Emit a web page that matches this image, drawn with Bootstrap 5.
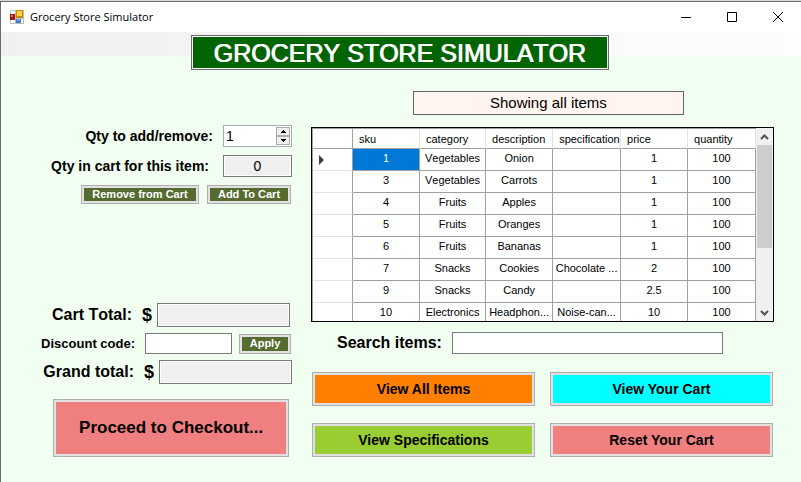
<!DOCTYPE html>
<html lang="en">
<head>
<meta charset="utf-8">
<meta name="viewport" content="width=device-width, initial-scale=1">
<title>Grocery Store Simulator</title>
<link href="https://cdn.jsdelivr.net/npm/bootstrap@5.3.0/dist/css/bootstrap.min.css" rel="stylesheet">
<style>
  body {
    font-family: "Liberation Sans", Arial, sans-serif;
    font-kerning: none;
    color: #000;
    background: #f0fff0;
    border-top: 1px solid #d9d9d9;
  }
  .app-window { min-height: calc(100vh - 1px); border-top: 1px solid #6b6b6b; border-left: 1px solid #6b6b6b; }

  .title-bar { height: 30px; background: #fff; padding-left: 9px; font: 11px/30px "Open Sans", "Noto Sans", sans-serif; }
  .title-bar .app-icon { margin-right: 6px; }
  .caption-btn { width: 46px; height: 30px; padding: 0; border: 0; background: none; line-height: 0; }

  .workspace { background: linear-gradient(90deg, #f0f0f0, #fdfdfd) top / 100% 24px no-repeat; padding: 3px 0 24px; }
  .banner-row { padding-right: 2px; }
  .banner { padding: 0 22px 0 21px; height: 35px; margin: 0; border: 1px solid #696969; box-shadow: inset 0 0 0 1px #fff; background: #006400; color: #fff; font-size: 25px; font-weight: 400; text-shadow: 1px 0 0 #fff; line-height: 34px; }

  .panes { display: grid; grid-template-columns: 291fr 463fr; column-gap: 19px; padding-right: 27px; }
  .pane-left { padding-top: 55px; }
  .pane-right { padding-top: 21px; }

  .lbl { font-size: 14px; font-weight: 700; line-height: 20px; white-space: nowrap; }
  .lbl-sm { font-size: 13px; }
  .lbl-lg { font-size: 16px; }
  .currency { margin-left: 10px; font-size: 18px; font-weight: 700; line-height: 20px; }
  .label-gap { gap: 10px; }
  .label-gap-lg { gap: 14px; }

  .field { min-width: 0; height: 22px; padding: 0 4px; border: 1px solid #7a7a7a; border-radius: 0; background: #fff; font-size: 14px; line-height: 18px; color: #000; }
  .field-read { background: #f0f0f0; box-shadow: inset 0 0 0 1px #fff; }
  .field-total { width: 133px; height: 24px; margin-left: 5px; }
  .field-qty { width: 69px; text-align: center; }
  .field-code { width: 87px; height: 21px; margin-left: 10px; }

  .spinner { width: 69px; height: 22px; border: 1px solid #abadb3; background: #fff; }
  .spinner input { width: 0; min-width: 0; padding: 0 2px; border: 0; background: none; font-size: 14px; line-height: 18px; outline: 0; appearance: textfield; -moz-appearance: textfield; }
  .spinner input::-webkit-inner-spin-button { -webkit-appearance: none; margin: 0; }
  .spin-btns { width: 15px; padding: 1px 1px 1px 0; }
  .spin-btns button { display: flex; align-items: center; justify-content: center; flex: 1 1 0; padding: 0; border: 1px solid #acacac; background: #f0f0f0; line-height: 0; }

  .push { border: 1px solid #adadad; border-radius: 0; box-shadow: inset 0 0 0 2px #e1e1e1; padding: 0; color: #000; font-weight: 700; font-size: 14px; line-height: 20px; white-space: nowrap; }
  .push-olive { height: 19px; background: #556b2f; color: #fff; font-size: 11px; line-height: 17px; }
  .push-remove { width: 118px; }
  .push-add { width: 84px; }
  .push-apply { width: 52px; height: 20px; margin-left: 7px; }
  .push-checkout { display: block; width: 81%; height: 58px; margin: 15px 3px 0 auto; font-size: 17px; background: #f08080; }
  .push-tall { height: 34px; }
  .bg-orange { background: #ff8000; }
  .bg-aqua { background: #0ff; }
  .bg-lime { background: #9acd32; }
  .bg-coral { background: #f08080; }

  .inset-1 { padding-right: 1px; }
  .inset-2 { padding-right: 2px; }
  .totals { display: grid; row-gap: 6px; margin-top: 99px; }

  .status-line { width: 271px; height: 24px; margin-left: 22%; border: 1px solid #646464; background: #fff5ee; font-size: 15px; line-height: 22px; text-align: center; }

  .grid-frame { height: 195px; margin-top: 12px; border: 1px solid #000; background: #fff; overflow: hidden; }
  .grid-view { flex: 1 1 0; min-width: 0; overflow: hidden; border-top: 1px solid #a0a0a0; border-left: 1px solid #a0a0a0; }
  .items { width: 100%; table-layout: fixed; border-collapse: separate; border-spacing: 0; font-size: 11px; line-height: 19px; }
  .items th, .items td { height: 22px; padding: 0 2px 2px; border-right: 1px solid #a0a0a0; border-bottom: 1px solid #a0a0a0; overflow: hidden; text-overflow: ellipsis; white-space: nowrap; text-align: center; font-weight: 400; }
  .items thead th { height: 20px; padding: 1px 0 0 6px; line-height: 18px; border-right-color: #e3e3e3; text-align: left; text-overflow: clip; }
  .items tbody th { padding: 0 0 0 6px; border-bottom-color: #e3e3e3; text-align: left; }
  .items thead th:first-child { border-right-color: #a0a0a0; }
  .items td.picked { background: #0078d7; color: #fff; }
  .c-head { width: 9%; }
  .c-narrow { width: 14.9%; }
  .c-mid { width: 15.1%; }
  .c-wide { width: 15.3%; }
  .scroll-rail { width: 17px; background: #f0f0f0; padding: 0 1px; }
  .scroll-rail button { width: 15px; height: 17px; padding: 0; border: 0; background: none; line-height: 0; }
  .thumb { height: 103px; background: #cdcdcd; }

  .search-row { gap: 10px; margin-top: 10px; padding: 0 51px 0 26px; }
  .actions { display: grid; grid-template-columns: 1fr 1fr; gap: 17px 15px; padding: 0 1px; margin-top: 18px; }
</style>
<script src="https://cdn.jsdelivr.net/npm/bootstrap@5.3.0/dist/js/bootstrap.bundle.min.js"></script>
</head>
<body>
<div class="app-window">
  <header class="title-bar d-flex align-items-center">
    <svg class="app-icon" width="14" height="14" viewBox="0 0 14 14" aria-hidden="true">
      <rect width="14" height="14" fill="#bdbdbd"/>
      <path d="M1 1h4v3H1zM1 10h4v3H1zM6 9h7v4H6z" fill="#fff"/>
      <rect y="4" width="5" height="6" fill="#a31515"/>
      <rect x="1" y="5" width="2" height="2" fill="#e8705c"/>
      <rect x="6" width="7" height="8" fill="#c98a00"/>
      <rect x="7" y="1" width="5" height="5" fill="#ffd23c"/>
      <rect x="6" y="9" width="5" height="4" fill="#3f78c9"/>
      <rect x="7" y="9" width="3" height="2" fill="#6fa5ee"/>
    </svg>
    <span class="me-auto">Grocery Store Simulator</span>
    <button class="caption-btn" type="button" aria-label="Minimize"><svg width="10" height="10"><path d="M0 5.5h10" stroke="#000"/></svg></button>
    <button class="caption-btn" type="button" aria-label="Maximize"><svg width="10" height="10"><path d="M.5.5h9v9h-9z" fill="none" stroke="#000"/></svg></button>
    <button class="caption-btn" type="button" aria-label="Close"><svg width="10" height="10"><path d="M0 0l10 10M10 0L0 10" stroke="#000"/></svg></button>
  </header>

  <main class="workspace">
    <div class="banner-row d-flex justify-content-center">
      <h1 class="banner">GROCERY STORE SIMULATOR</h1>
    </div>

    <div class="panes">
      <form class="pane-left" onsubmit="return false">
        <div class="d-flex justify-content-end align-items-center label-gap">
          <label class="lbl" for="qty">Qty to add/remove:</label>
          <div class="spinner d-flex">
            <input class="flex-fill" id="qty" type="number" value="1" min="1">
            <div class="spin-btns d-flex flex-column">
              <button type="button" aria-label="Increase"><svg width="5" height="3"><path d="M2 0h1v1h1v1h1v1H0V2h1V1h1z"/></svg></button>
              <button type="button" aria-label="Decrease"><svg width="5" height="3"><path d="M0 0h5v1H4v1H3v1H2V2H1V1H0z"/></svg></button>
            </div>
          </div>
        </div>
        <div class="d-flex justify-content-end align-items-center label-gap-lg mt-2">
          <label class="lbl" for="inCart">Qty in cart for this item:</label>
          <input class="field field-read field-qty" id="inCart" value="0" readonly>
        </div>
        <div class="d-flex justify-content-end gap-2 mt-2 inset-1">
          <button class="push push-olive push-remove" type="button">Remove from Cart</button>
          <button class="push push-olive push-add" type="button">Add To Cart</button>
        </div>

        <div class="totals">
          <div class="d-flex justify-content-end align-items-center inset-2">
            <label class="lbl lbl-lg" for="cartTotal">Cart Total:</label>
            <span class="currency">$</span>
            <input class="field field-read field-total" id="cartTotal" readonly>
          </div>
          <div class="d-flex justify-content-end align-items-center inset-1">
            <label class="lbl lbl-sm" for="code">Discount code:</label>
            <input class="field field-code" id="code">
            <button class="push push-olive push-apply" type="button">Apply</button>
          </div>
          <div class="d-flex justify-content-end align-items-center">
            <label class="lbl lbl-lg" for="grandTotal">Grand total:</label>
            <span class="currency">$</span>
            <input class="field field-read field-total" id="grandTotal" readonly>
          </div>
        </div>
        <button class="push push-checkout" type="button">Proceed to Checkout...</button>
      </form>

      <section class="pane-right">
        <div class="status-line" role="status">Showing all items</div>

        <div class="grid-frame d-flex">
          <div class="grid-view">
            <table class="items">
              <colgroup><col class="c-head"><col class="c-mid"><col class="c-narrow"><col class="c-mid"><col class="c-wide"><col class="c-mid"><col class="c-wide"></colgroup>
              <thead>
                <tr><th></th><th>sku</th><th>category</th><th>description</th><th>specification</th><th>price</th><th>quantity</th></tr>
              </thead>
              <tbody>
                <tr><th scope="row"><svg width="6" height="10"><path d="M0 0l5 5-5 5z" fill="#404040"/></svg></th><td class="picked">1</td><td>Vegetables</td><td>Onion</td><td></td><td>1</td><td>100</td></tr>
                <tr><th></th><td>3</td><td>Vegetables</td><td>Carrots</td><td></td><td>1</td><td>100</td></tr>
                <tr><th></th><td>4</td><td>Fruits</td><td>Apples</td><td></td><td>1</td><td>100</td></tr>
                <tr><th></th><td>5</td><td>Fruits</td><td>Oranges</td><td></td><td>1</td><td>100</td></tr>
                <tr><th></th><td>6</td><td>Fruits</td><td>Bananas</td><td></td><td>1</td><td>100</td></tr>
                <tr><th></th><td>7</td><td>Snacks</td><td>Cookies</td><td>Chocolate ...</td><td>2</td><td>100</td></tr>
                <tr><th></th><td>9</td><td>Snacks</td><td>Candy</td><td></td><td>2.5</td><td>100</td></tr>
                <tr><th></th><td>10</td><td>Electronics</td><td>Headphon...</td><td>Noise-can...</td><td>10</td><td>100</td></tr>
              </tbody>
            </table>
          </div>
          <div class="scroll-rail d-flex flex-column">
            <button type="button" aria-label="Scroll up"><svg width="9" height="6"><path d="M1 5l3.500-3.500L8 5" fill="none" stroke="#505050" stroke-width="2"/></svg></button>
            <div class="thumb"></div>
            <button class="mt-auto" type="button" aria-label="Scroll down"><svg width="9" height="6"><path d="M1 1l3.500 3.500L8 1" fill="none" stroke="#505050" stroke-width="2"/></svg></button>
          </div>
        </div>

        <div class="search-row d-flex align-items-center">
          <label class="lbl lbl-lg" for="search">Search items:</label>
          <input class="field flex-fill" id="search" type="text">
        </div>

        <div class="actions">
          <button class="push push-tall bg-orange" type="button">View All Items</button>
          <button class="push push-tall bg-aqua" type="button">View Your Cart</button>
          <button class="push push-tall bg-lime" type="button">View Specifications</button>
          <button class="push push-tall bg-coral" type="button">Reset Your Cart</button>
        </div>
      </section>
    </div>
  </main>
</div>
</body>
</html>
